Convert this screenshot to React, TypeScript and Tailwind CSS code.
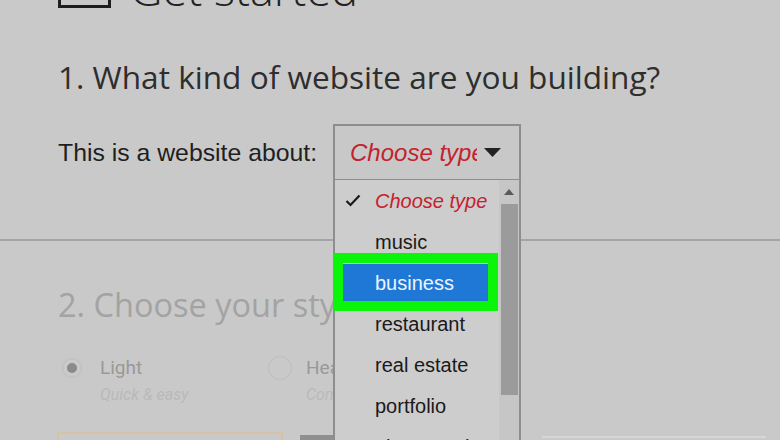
export default function App() {
  const items = ["music", "business", "restaurant", "real estate", "portfolio", "photography"];
  return (
    <div className="relative w-[780px] h-[440px] overflow-hidden bg-[#c9c9c9]">
      {/* Section 1 */}
      <div className="pl-[58px]">
        <div className="flex items-end gap-[19px] -mt-[34px] h-[46px]">
          <div className="w-[53px] h-[34px] border-[3px] border-[#1e1e1e] mb-[4px] shrink-0"></div>
          <div className="font-['Open_Sans',sans-serif] font-light text-[45px] leading-[46px] text-[#222] whitespace-nowrap">
            Get started
          </div>
        </div>
        <div className="mt-[49px] font-['Open_Sans',sans-serif] text-[31.6px] leading-[31px] text-[#2e2e2e] whitespace-nowrap">
          1. What kind of website are you building?
        </div>
        <div className="mt-[32px] flex items-center h-[57px]">
          <div className="w-[275px] font-['Liberation_Sans',Arial,sans-serif] text-[24.8px] text-[#1f1f1f] whitespace-nowrap">
            This is a website about:
          </div>
          <div className="w-[188px] h-[57px] border-2 border-[#8d8d8d] bg-[#c8c8c8] flex items-center pl-[15px]">
            <div className="w-[127px] overflow-hidden whitespace-nowrap font-['Liberation_Sans',Arial,sans-serif] italic text-[24px] text-[#c4222e]">
              Choose type
            </div>
            <svg width="17" height="10" viewBox="0 0 17 10" className="ml-[7px]">
              <polygon points="0,0 17,0 8.5,9" fill="#222" />
            </svg>
          </div>
        </div>
      </div>

      <div className="mt-[58px] border-t-2 border-[#a4a4a4]"></div>

      {/* Section 2 (faded) */}
      <div className="pl-[58px]">
        <div className="mt-[48px] font-['Open_Sans',sans-serif] text-[32.5px] leading-[31px] text-[#a3a3a3] whitespace-nowrap">
          2. Choose your style
        </div>
        <div className="mt-[38px] flex">
          <div className="w-[210px] flex">
            <div className="ml-[4px] w-[20px] h-[20px] rounded-full border border-[#bdbdbd] flex items-center justify-center shrink-0">
              <div className="w-[10px] h-[10px] rounded-full bg-[#8a8a8a]"></div>
            </div>
            <div className="ml-[18px] font-['Roboto',Arial,sans-serif]">
              <div className="text-[19px] leading-[20px] text-[#999]">Light</div>
              <div className="mt-[7px] text-[16px] leading-[20px] italic text-[#b9b9b9]">Quick &amp; easy</div>
            </div>
          </div>
          <div className="flex">
            <div className="-mt-[2px] w-[24px] h-[24px] rounded-full border border-[#bdbdbd] shrink-0"></div>
            <div className="ml-[14px] font-['Roboto',Arial,sans-serif]">
              <div className="text-[19px] leading-[20px] text-[#999]">Heavy</div>
              <div className="mt-[7px] text-[16px] leading-[20px] italic text-[#b9b9b9]">Complete</div>
            </div>
          </div>
        </div>
        <div className="mt-[27px] flex items-start">
          <div className="-ml-[1px] w-[226px] h-[40px] border-2 border-[#d6c3a5]"></div>
          <div className="ml-[17px] mt-[3px] w-[60px] h-[40px] bg-[#8f8f8f]"></div>
          <div className="ml-[182px] mt-[4px] w-[224px] h-[40px] border-t-2 border-[#d6d6d6]"></div>
        </div>
      </div>

      {/* Open dropdown list */}
      <div className="absolute left-[333px] top-[180px] w-[188px] h-[280px] border-x-2 border-[#8e8e8e] bg-[#cdcdcd] flex">
        <div className="w-[164px] font-['Liberation_Sans',Arial,sans-serif] text-[20px]">
          <div className="h-[41px] flex items-center">
            <svg width="16" height="13" viewBox="0 0 16 13" className="ml-[10px]">
              <polyline points="1.5,7 5.5,11 14.5,1.5" fill="none" stroke="#1a1a1a" strokeWidth="2.2" />
            </svg>
            <span className="ml-[14px] italic text-[#c4222e]">Choose type</span>
          </div>
          {items.map((it) =>
            it === "business" ? (
              <div key={it} className="h-[41px] flex items-center">
                <div className="ml-[8px] w-[145px] h-[38px] bg-[#1f78d6] flex items-center pl-[32px] text-[#eef4ff]">
                  {it}
                </div>
              </div>
            ) : (
              <div key={it} className="h-[41px] flex items-center pl-[40px] text-[#1a1a1a]">
                {it}
              </div>
            )
          )}
        </div>
        <div className="w-[20px] bg-[#c6c6c6] flex flex-col items-center">
          <svg width="10" height="6" viewBox="0 0 10 6" className="mt-[9px]">
            <polygon points="0,6 10,6 5,0" fill="#5a5a5a" />
          </svg>
          <div className="mt-[9px] w-[17px] h-[191px] bg-[#9b9b9b]"></div>
        </div>
      </div>

      {/* Green annotation highlight */}
      <div className="absolute left-[333px] top-[253px] w-[165px] h-[58px] border-[10px] border-[#0bf50b]"></div>
    </div>
  );
}
